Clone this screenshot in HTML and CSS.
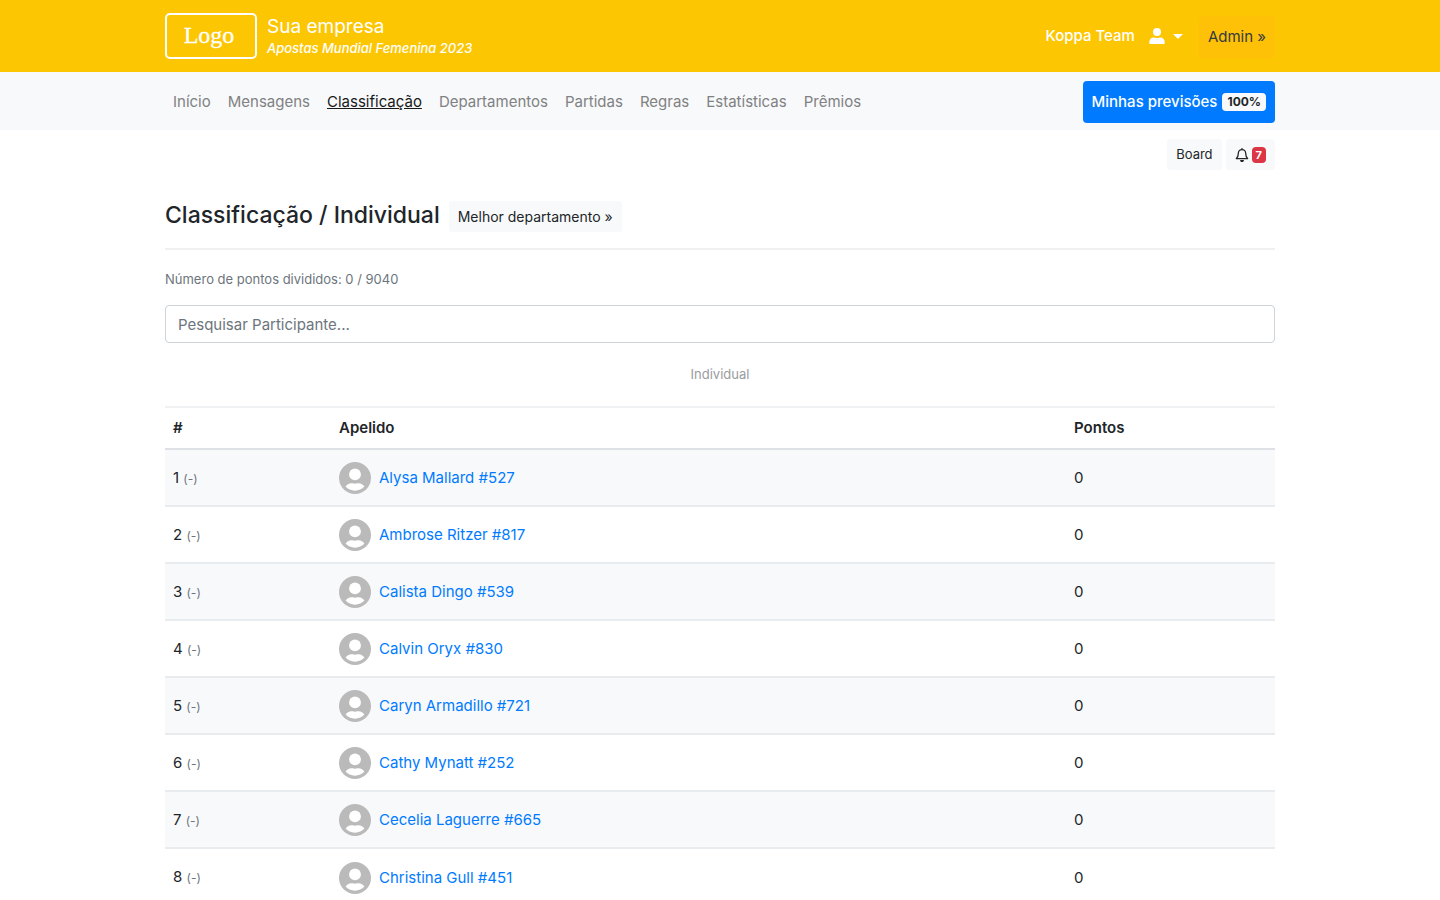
FILE: index.html
```html
<!DOCTYPE html>
<html lang="pt">
<head>
<meta charset="utf-8">
<meta name="viewport" content="width=device-width, initial-scale=1">
<title>Classificação / Individual</title>
<link rel="stylesheet" href="styles.css">
</head>
<body>
<svg class="sprite" aria-hidden="true">
  <symbol id="avatar" viewBox="0 0 32 32">
    <circle cx="16" cy="16" r="16" fill="#bababa"/>
    <circle cx="16" cy="12.4" r="5.9" fill="#fff"/>
    <path d="M6.6 24.6C8 22 11 20.7 13.6 21.3c1.7.5 3.1.5 4.8 0 2.6-.6 5.6.7 7 3.3-2.3 2.6-5.600 4.100-9.400 4.100s-7.100-1.500-9.400-4.100z" fill="#fff"/>
  </symbol>
</svg>
<header class="topbar">
  <div class="container topbar-row">
    <a class="brand" href="#">
      <span class="logo">Logo</span>
      <span class="brand-text">
        <span class="company">Sua empresa</span>
        <em class="pool">Apostas Mundial Femenina 2023</em>
      </span>
    </a>
    <div class="account">
      <a class="team" href="#">Koppa Team</a>
      <button class="user-menu" type="button" aria-label="Conta">
        <svg width="16" height="18" viewBox="0 0 16 18" fill="#fff"><circle cx="8" cy="5" r="4"/><path d="M1 17c-.6 0-.8-.4-.8-.9 0-3.600 1.600-5.600 4.600-5.600h.5c1.700.8 3.700.8 5.400 0h.5c3 0 4.600 2 4.600 5.600 0 .5-.2.9-.8.9z"/></svg>
        <span class="caret"></span>
      </button>
      <a class="admin" href="#">Admin »</a>
    </div>
  </div>
</header>
<nav class="navbar">
  <div class="container navbar-row">
    <div class="nav-links">
      <a href="#">Início</a>
      <a href="#">Mensagens</a>
      <a class="active" href="#">Classificação</a>
      <a href="#">Departamentos</a>
      <a href="#">Partidas</a>
      <a href="#">Regras</a>
      <a href="#">Estatísticas</a>
      <a href="#">Prêmios</a>
    </div>
    <a class="predictions" href="#">Minhas previsões <span class="badge">100%</span></a>
  </div>
</nav>
<main class="container">
  <div class="tools">
    <a class="btn-light" href="#">Board</a>
    <button class="btn-light" type="button" aria-label="Notificações">
      <svg width="14" height="14" viewBox="0 0 14 14" fill="none" stroke="#212529" stroke-width="1.300" stroke-linejoin="round" stroke-linecap="round"><path d="M7 .6v1M7 1.600C4.700 1.600 3.300 3.200 3.300 5.400c0 2.600-.7 3.800-2 5.200h11.400c-1.300-1.400-2-2.600-2-5.200C10.700 3.200 9.300 1.600 7 1.600z"/><path d="M5.700 12.600c.3.700.7.900 1.300.9s1-.2 1.300-.9z"/></svg>
      <span class="count">7</span>
    </button>
  </div>
  <div class="heading">
    <h1>Classificação / Individual</h1>
    <a class="btn-light" href="#">Melhor departamento »</a>
  </div>
  <p class="points">Número de pontos divididos: 0 / 9040</p>
  <input class="search" type="text" placeholder="Pesquisar Participante..." aria-label="Pesquisar Participante">
  <table class="ranking">
    <caption>Individual</caption>
    <thead><tr><th class="rank" scope="col">#</th><th scope="col">Apelido</th><th class="score" scope="col">Pontos</th></tr></thead>
    <tbody>
      <tr><td>1 <small>(-)</small></td><td><a class="player" href="#"><svg class="avatar"><use href="#avatar"/></svg>Alysa Mallard #527</a></td><td>0</td></tr>
      <tr><td>2 <small>(-)</small></td><td><a class="player" href="#"><svg class="avatar"><use href="#avatar"/></svg>Ambrose Ritzer #817</a></td><td>0</td></tr>
      <tr><td>3 <small>(-)</small></td><td><a class="player" href="#"><svg class="avatar"><use href="#avatar"/></svg>Calista Dingo #539</a></td><td>0</td></tr>
      <tr><td>4 <small>(-)</small></td><td><a class="player" href="#"><svg class="avatar"><use href="#avatar"/></svg>Calvin Oryx #830</a></td><td>0</td></tr>
      <tr><td>5 <small>(-)</small></td><td><a class="player" href="#"><svg class="avatar"><use href="#avatar"/></svg>Caryn Armadillo #721</a></td><td>0</td></tr>
      <tr><td>6 <small>(-)</small></td><td><a class="player" href="#"><svg class="avatar"><use href="#avatar"/></svg>Cathy Mynatt #252</a></td><td>0</td></tr>
      <tr><td>7 <small>(-)</small></td><td><a class="player" href="#"><svg class="avatar"><use href="#avatar"/></svg>Cecelia Laguerre #665</a></td><td>0</td></tr>
      <tr><td>8 <small>(-)</small></td><td><a class="player" href="#"><svg class="avatar"><use href="#avatar"/></svg>Christina Gull #451</a></td><td>0</td></tr>
    </tbody>
  </table>
</main>
</body>
</html>
```
FILE: styles.css
```css
* { box-sizing: border-box; }
body { margin: 0; font: 15px/24px Inter, "Liberation Sans", sans-serif; color: #212529; background: #fff; overflow-x: hidden; }
html { scrollbar-width: none; }
a { color: inherit; text-decoration: none; }
button { font: inherit; border: 0; cursor: pointer; }
.sprite { display: none; }
.container { width: 100%; max-width: 1140px; margin: 0 auto; padding: 0 15px; }

.topbar { background: #fdc603; color: #fff; }
.topbar-row { display: flex; justify-content: space-between; align-items: center; min-height: 72px; }
.brand { display: flex; align-items: center; gap: 10px; }
.logo { width: 92px; height: 46px; border: 2px solid #fff; border-radius: 5px; padding-right: 4px; font: 24px/40px "Liberation Serif", serif; text-align: center; -webkit-text-stroke: 0.3px #fff; }
.brand-text { display: flex; flex-direction: column; }
.company { font-size: 19px; line-height: 24px; }
.pool { font-size: 13px; line-height: 18px; font-weight: 500; }
.account { display: flex; align-items: center; }
.team { font-weight: 500; }
.user-menu { display: flex; align-items: center; gap: 8px; margin: 0 16px 0 14px; padding: 0; background: none; }
.caret { border: 5px solid transparent; border-top-color: #fff; border-bottom: 0; }
.admin { padding: 9px; margin-top: 2px; border-radius: 4px; background: #ffc107; color: #343a40; }

.navbar { background: #f8f9fb; }
.navbar-row { display: flex; justify-content: space-between; align-items: center; min-height: 58px; padding: 9px 15px 7px; }
.nav-links { display: flex; gap: 17px; padding: 0 8px; color: #808182; }
.nav-links .active { color: #19191a; text-decoration: underline; }
.predictions { padding: 9px; border-radius: 4px; background: #007bff; color: #fff; font-weight: 500; display: flex; align-items: center; gap: 5px; }
.badge { padding: 0 5px; border-radius: 4px; background: #f8f9fa; color: #212529; font-size: 12px; line-height: 18px; font-weight: 700; }

.tools { display: flex; justify-content: flex-end; gap: 4px; padding-top: 9px; }
.btn-light { display: flex; align-items: center; gap: 3px; min-height: 31px; padding: 0 9px; border-radius: 3px; background: #f8f9fa; color: #212529; font-size: 13px; line-height: 21px; }
.count { padding: 0 4px; border-radius: 4px; background: #dc3545; color: #fff; font-size: 11px; line-height: 16px; font-weight: 700; }
.heading { display: flex; align-items: center; gap: 9px; margin-top: 31px; padding-bottom: 16px; border-bottom: 2px solid #f0f0f0; }
.heading .btn-light { font-size: 14px; }
h1 { margin: 0; font-size: 23px; line-height: 28px; padding-bottom: 3px; font-weight: 500; }
.points { margin: 20px 0 16px; font-size: 13px; line-height: 19px; color: #6c757d; }
.search { display: block; width: 100%; height: 38px; padding: 6px 12px; border: 1px solid #ced4da; border-radius: 4px; font: inherit; color: #495057; }
.search::placeholder { color: #6c757d; opacity: 1; }

.ranking { width: 100%; border-collapse: collapse; table-layout: fixed; }
caption { padding: 20px 0; font-size: 13px; line-height: 23px; color: #999c9f; }
th, td { text-align: left; padding: 8px; border-top: 2px solid #e9ecef; }
th { font-weight: 600; border-top-color: #f0f1f2; }
.rank { width: 166px; }
.score { width: 209px; }
thead th { border-bottom: 2px solid #dee2e6; }
td { height: 57px; padding-bottom: 7px; }
tbody tr:nth-child(odd) { background: #f8f9fb; }
tbody tr:first-child td { border-top-color: #dee2e6; }
small { font-size: 12px; color: #6c757d; }
.player { display: flex; align-items: center; gap: 8px; color: #007bff; }
.avatar { width: 32px; height: 32px; }
```
